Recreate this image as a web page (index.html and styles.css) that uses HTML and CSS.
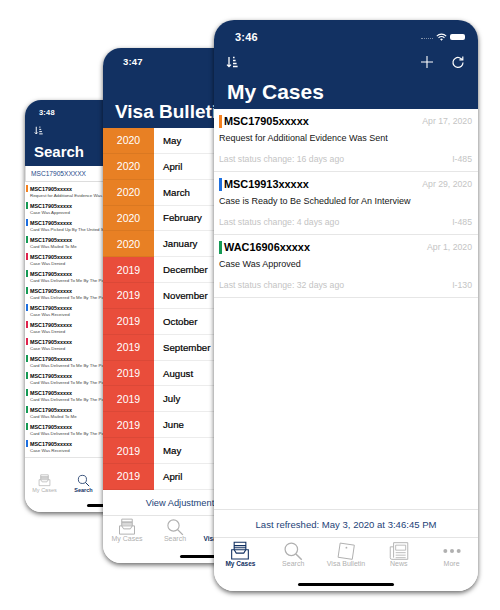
FILE: index.html
```html
<!DOCTYPE html>
<html lang="en">
<head>
    <meta charset="UTF-8">
    <meta name="viewport" content="width=device-width, initial-scale=1.0">
    <title>My Cases</title>
    <link rel="stylesheet" href="styles.css">
</head>
<body>
    <svg class="icon-defs" width="0" height="0">
        <symbol id="i-sort" viewBox="0 0 12 12">
            <path d="M3 1v9.500M1 8.600l2 2 2-2M7 1.500h1.600M7 4.500h2.600M7 7.500h3.600M7 10.500h4.600" fill="none" stroke="currentColor" stroke-width="1.300"/>
        </symbol>
        <symbol id="i-inbox" viewBox="0 0 24 24">
            <path d="M5 1.500h14v4H5zM5 5.500h14v5H5zM2 10.500h3l2.500 4h9l2.500-4h3v11H2zM5 8h14" fill="none" stroke="currentColor" stroke-width="1.300"/>
        </symbol>
        <symbol id="i-search" viewBox="0 0 24 24">
            <circle cx="10" cy="10" r="7.500" fill="none" stroke="currentColor" stroke-width="1.500"/>
            <path d="M15.500 15.500l7 7" fill="none" stroke="currentColor" stroke-width="1.800"/>
        </symbol>
        <symbol id="i-note" viewBox="0 0 24 24">
            <path d="M5 2.500l17 2.500-2.500 17L2.500 19.500z" fill="none" stroke="currentColor" stroke-width="1.200"/>
            <circle cx="12.500" cy="8" r="1.100" fill="currentColor"/>
        </symbol>
        <symbol id="i-news" viewBox="0 0 24 24">
            <path d="M5.500 2h17v20H3.500a2 2 0 0 1-2-2V7h4M5.500 2v18" fill="none" stroke="currentColor" stroke-width="1.100"/>
            <path d="M8 5h12v6H8zM8 14h12M8 17h12M8 20h12" fill="none" stroke="currentColor" stroke-width="1"/>
        </symbol>
        <symbol id="i-more" viewBox="0 0 24 24">
            <circle cx="4" cy="12" r="2.400" fill="currentColor"/>
            <circle cx="12" cy="12" r="2.400" fill="currentColor"/>
            <circle cx="20" cy="12" r="2.400" fill="currentColor"/>
        </symbol>
    </svg>

    <div class="canvas">

        <!-- back phone: search -->
        <section class="phone phone-search">
            <header class="bar">
                <div class="time">3:48</div>
                <svg class="sort"><use href="#i-sort"/></svg>
                <h1>Search</h1>
            </header>
            <div class="search-field">MSC17905XXXXX</div>
            <ul class="mini-list">
                <li class="orange"><b>MSC17905xxxxx</b><span>Request for Additional Evidence Was Sent</span></li>
                <li class="green"><b>MSC17905xxxxx</b><span>Case Was Approved</span></li>
                <li class="blue"><b>MSC17905xxxxx</b><span>Card Was Picked Up By The United States</span></li>
                <li class="green"><b>MSC17905xxxxx</b><span>Card Was Mailed To Me</span></li>
                <li class="red"><b>MSC17905xxxxx</b><span>Case Was Denied</span></li>
                <li class="green"><b>MSC17905xxxxx</b><span>Card Was Delivered To Me By The Post</span></li>
                <li class="green"><b>MSC17905xxxxx</b><span>Card Was Delivered To Me By The Post</span></li>
                <li class="blue"><b>MSC17905xxxxx</b><span>Case Was Received</span></li>
                <li class="red"><b>MSC17905xxxxx</b><span>Case Was Denied</span></li>
                <li class="red"><b>MSC17905xxxxx</b><span>Case Was Denied</span></li>
                <li class="green"><b>MSC17905xxxxx</b><span>Card Was Delivered To Me By The Post</span></li>
                <li class="green"><b>MSC17905xxxxx</b><span>Card Was Delivered To Me By The Post</span></li>
                <li class="green"><b>MSC17905xxxxx</b><span>Card Was Delivered To Me By The Post</span></li>
                <li class="green"><b>MSC17905xxxxx</b><span>Card Was Mailed To Me</span></li>
                <li class="green"><b>MSC17905xxxxx</b><span>Card Was Delivered To Me By The Post</span></li>
                <li class="blue"><b>MSC17905xxxxx</b><span>Case Was Received</span></li>
                <li class="blue"></li>
            </ul>
            <nav class="tabs">
                <a class="tab"><svg><use href="#i-inbox"/></svg>My Cases</a>
                <a class="tab active"><svg><use href="#i-search"/></svg>Search</a>
                <a class="tab"></a>
                <a class="tab"></a>
                <a class="tab"></a>
            </nav>
            <div class="home-bar"></div>
        </section>

        <!-- middle phone: visa bulletin -->
        <section class="phone phone-visa">
            <header class="bar">
                <div class="time">3:47</div>
                <h1>Visa Bulletin</h1>
            </header>
            <ul class="months">
                <li><span class="year y2020">2020</span><span class="month">May</span></li>
                <li><span class="year y2020">2020</span><span class="month">April</span></li>
                <li><span class="year y2020">2020</span><span class="month">March</span></li>
                <li><span class="year y2020">2020</span><span class="month">February</span></li>
                <li><span class="year y2020">2020</span><span class="month">January</span></li>
                <li><span class="year y2019">2019</span><span class="month">December</span></li>
                <li><span class="year y2019">2019</span><span class="month">November</span></li>
                <li><span class="year y2019">2019</span><span class="month">October</span></li>
                <li><span class="year y2019">2019</span><span class="month">September</span></li>
                <li><span class="year y2019">2019</span><span class="month">August</span></li>
                <li><span class="year y2019">2019</span><span class="month">July</span></li>
                <li><span class="year y2019">2019</span><span class="month">June</span></li>
                <li><span class="year y2019">2019</span><span class="month">May</span></li>
                <li><span class="year y2019">2019</span><span class="month">April</span></li>
            </ul>
            <div class="footer-link">View Adjustment of Status Filing Charts</div>
            <nav class="tabs">
                <a class="tab"><svg><use href="#i-inbox"/></svg>My Cases</a>
                <a class="tab"><svg><use href="#i-search"/></svg>Search</a>
                <a class="tab active"><svg><use href="#i-note"/></svg>Visa Bulletin</a>
                <a class="tab"></a>
                <a class="tab"></a>
            </nav>
            <div class="home-bar"></div>
        </section>

        <!-- front phone: my cases -->
        <section class="phone phone-cases">
            <header class="bar">
                <div class="status">
                    <div class="time">3:46</div>
                    <div class="status-icons">
                        <span class="signal"></span>
                        <svg class="wifi" viewBox="0 0 14 10">
                            <path d="M1 3.800a8.500 8.500 0 0 1 12 0M3.200 6a5.400 5.400 0 0 1 7.600 0" fill="none" stroke="currentColor" stroke-width="1.400"/>
                            <path d="M5.200 7.900a2.600 2.600 0 0 1 3.600 0L7 9.700z" fill="currentColor"/>
                        </svg>
                        <span class="battery"></span>
                    </div>
                </div>
                <div class="actions">
                    <svg class="sort"><use href="#i-sort"/></svg>
                    <div class="actions-right">
                        <svg class="action" viewBox="0 0 14 14">
                            <path d="M7 1v12M1 7h12" fill="none" stroke="currentColor" stroke-width="1.100"/>
                        </svg>
                        <svg class="action" viewBox="0 0 14 14">
                            <path d="M12 7.500A5 5 0 1 1 8.500 2.700L11.500 4.500" fill="none" stroke="currentColor" stroke-width="1.200"/>
                            <path d="M11.800 1.500v3.400H8.400" fill="none" stroke="currentColor" stroke-width="1.200"/>
                        </svg>
                    </div>
                </div>
                <h1>My Cases</h1>
            </header>
            <ul class="cases">
                <li class="case">
                    <div class="case-top"><b class="code orange">MSC17905xxxxx</b><span>Apr 17, 2020</span></div>
                    <p>Request for Additional Evidence Was Sent</p>
                    <div class="case-bottom"><span>Last status change: 16 days ago</span><span>I-485</span></div>
                </li>
                <li class="case">
                    <div class="case-top"><b class="code blue">MSC19913xxxxx</b><span>Apr 29, 2020</span></div>
                    <p>Case is Ready to Be Scheduled for An Interview</p>
                    <div class="case-bottom"><span>Last status change: 4 days ago</span><span>I-485</span></div>
                </li>
                <li class="case">
                    <div class="case-top"><b class="code green">WAC16906xxxxx</b><span>Apr 1, 2020</span></div>
                    <p>Case Was Approved</p>
                    <div class="case-bottom"><span>Last status change: 32 days ago</span><span>I-130</span></div>
                </li>
            </ul>
            <div class="footer-link">Last refreshed: May 3, 2020 at 3:46:45 PM</div>
            <nav class="tabs">
                <a class="tab active"><svg><use href="#i-inbox"/></svg>My Cases</a>
                <a class="tab"><svg><use href="#i-search"/></svg>Search</a>
                <a class="tab"><svg><use href="#i-note"/></svg>Visa Bulletin</a>
                <a class="tab"><svg><use href="#i-news"/></svg>News</a>
                <a class="tab"><svg class="more"><use href="#i-more"/></svg>More</a>
            </nav>
            <div class="home-bar"></div>
        </section>
    </div>
</body>
</html>
```

FILE: styles.css
```css
* {
    box-sizing: border-box;
}
body {
    margin: 0;
    background-color: white;
    font-family: "Liberation Sans", Arial, sans-serif;
    color: black;
}
ul {
    list-style: none;
    margin: 0;
    padding: 0;
}
h1, p {
    margin: 0;
}
.icon-defs {
    position: absolute;
}
.canvas {
    position: relative;
    width: 500px;
    height: 610px;
    overflow: hidden;
}

/* phones */
.phone {
    position: absolute;
    display: flex;
    flex-direction: column;
    background-color: white;
    overflow: hidden;
    box-shadow: 0 2px 5px rgba(0, 0, 0, 0.6);
}
.phone-search {
    left: 25px;
    top: 100px;
    width: 195px;
    height: 412px;
    border-radius: 16px;
}
.phone-visa {
    left: 103px;
    top: 48px;
    width: 240px;
    height: 515px;
    border-radius: 18px;
}
.phone-cases {
    left: 214px;
    top: 20px;
    width: 264px;
    height: 571px;
    border-radius: 20px;
}
.bar {
    background-color: #123162;
    color: white;
    flex-shrink: 0;
}
.bar h1 {
    font-size: 21px;
    line-height: 26px;
    font-weight: bold;
}
.time {
    font-size: 9.500px;
    font-weight: bold;
    letter-spacing: 0.2px;
}
.sort {
    display: block;
    width: 12px;
    height: 12px;
}

/* tab bar */
.tabs {
    display: flex;
    flex-shrink: 0;
    border-top: 1px solid #e4e4e4;
    background-color: white;
}
.tab {
    flex: 1 1 0;
    display: flex;
    flex-direction: column;
    align-items: center;
    color: #b0b0b0;
    white-space: nowrap;
    font-size: 7px;
}
.tab svg {
    display: block;
    width: 18px;
    height: 18px;
    margin-bottom: -1px;
}
.tab .more {
    width: 15px;
}
.tab.active {
    color: #123162;
    font-size: 6.500px;
    font-weight: bold;
}
.home-bar {
    position: absolute;
    left: 50%;
    bottom: 5px;
    width: 36%;
    height: 3px;
    margin-left: -18%;
    border-radius: 2px;
    background-color: black;
}
.footer-link {
    flex-shrink: 0;
    text-align: center;
    white-space: nowrap;
    color: #1d3f77;
}

/* front phone */
.phone-cases .bar {
    height: 89px;
    padding: 11px 13px 0;
}
.phone-cases .time {
    font-size: 11px;
}
.status {
    display: flex;
    justify-content: space-between;
    align-items: center;
    height: 11px;
    padding-left: 8px;
}
.status-icons {
    display: flex;
    align-items: center;
    gap: 3px;
}
.signal {
    width: 12px;
    height: 1px;
    margin-top: 4px;
    border-top: 1px dotted #7f8fa8;
}
.wifi {
    width: 11px;
    height: 8px;
}
.battery {
    width: 15px;
    height: 6px;
    border-radius: 2px;
    background-color: white;
}
.actions {
    display: flex;
    justify-content: space-between;
    align-items: center;
    height: 14px;
    margin-top: 13px;
    margin-left: -1px;
}
.actions-right {
    display: flex;
    gap: 17px;
}
.action {
    width: 14px;
    height: 14px;
}
.phone-cases h1 {
    margin-top: 10px;
}
.phone-cases .tabs {
    height: 54px;
    padding-top: 3px;
}
.phone-cases .tab svg {
    width: 20px;
    height: 20px;
}
.phone-cases .footer-link {
    height: 28px;
    line-height: 29px;
    border-top: 1px solid #e4e4e4;
    font-size: 9.550px;
}
.cases {
    flex: 1;
}
.case {
    height: 63px;
    padding: 5px 6px 0 5px;
    border-bottom: 1px solid #e6e6e6;
}
.case-top, .case-bottom {
    display: flex;
    justify-content: space-between;
    align-items: center;
    color: #c4c4c4;
    font-size: 8.700px;
}
.case-top {
    height: 14px;
}
.code {
    padding-left: 2px;
    border-left: 3px solid;
    color: black;
    font-size: 10.900px;
    line-height: 13px;
}
.code.orange {
    border-left-color: #f5811f;
}
.code.blue {
    border-left-color: #1c6fe0;
}
.code.green {
    border-left-color: #159a55;
}
.case p {
    margin-top: 5px;
    font-size: 9px;
    line-height: 11px;
    color: #161616;
}
.case-bottom {
    margin-top: 9px;
    height: 11px;
}

/* middle phone */
.phone-visa .bar {
    height: 80px;
    padding: 8px 12px 0;
}
.phone-visa .time {
    padding-left: 8px;
}
.phone-visa h1 {
    margin-top: 32px;
    font-size: 19px;
    white-space: nowrap;
}
.months {
    flex-shrink: 0;
}
.months li {
    display: flex;
    height: 25.850px;
}
.year {
    width: 51px;
    display: flex;
    align-items: center;
    justify-content: center;
    border-bottom: 1px solid rgba(0, 0, 0, 0.06);
    color: white;
    font-size: 10.500px;
}
.y2020 {
    background-color: #e88024;
}
.y2019 {
    background-color: #e94d3b;
}
.month {
    flex: 1;
    display: flex;
    align-items: center;
    padding-left: 9px;
    border-bottom: 1px solid #ececec;
    font-size: 9.700px;
    -webkit-text-stroke: 0.2px black;
    color: black;
}
.phone-visa .footer-link {
    height: 25px;
    line-height: 26px;
    padding-left: 8px;
    font-size: 9.300px;
}
.phone-visa .tabs {
    height: 48px;
    padding-top: 2px;
}

/* back phone */
.phone-search .bar {
    height: 66px;
    padding: 8px 9px 0;
}
.phone-search .time {
    padding-left: 5px;
    font-size: 7.500px;
}
.phone-search .sort {
    width: 9px;
    height: 9px;
    margin-top: 9px;
}
.phone-search h1 {
    margin-top: 7px;
    font-size: 15px;
    line-height: 20px;
}
.search-field {
    flex-shrink: 0;
    height: 16px;
    padding-left: 5px;
    line-height: 15px;
    border-bottom: 1px solid #ddd;
    border-left: 1px solid #ddd;
    color: #1f4a8a;
    font-size: 6.600px;
}
.mini-list {
    flex-shrink: 0;
    height: 276px;
    overflow: hidden;
    padding-top: 1.500px;
    border-bottom: 1px solid #e4e4e4;
}
.mini-list li {
    height: 17px;
    padding: 1px 0 0 5px;
    position: relative;
    white-space: nowrap;
}
.mini-list li::before {
    content: "";
    position: absolute;
    left: 1px;
    top: 1.500px;
    width: 2px;
    height: 7px;
}
.mini-list .orange::before {
    background-color: #f5811f;
}
.mini-list .green::before {
    background-color: #159a55;
}
.mini-list .blue::before {
    background-color: #1c6fe0;
}
.mini-list .red::before {
    background-color: #e0234e;
}
.mini-list b {
    display: block;
    font-size: 5.400px;
    line-height: 8px;
}
.mini-list span {
    display: block;
    font-size: 4.400px;
    line-height: 6px;
    color: #444;
}
.phone-search .tabs {
    margin-top: auto;
    height: 40px;
    padding-top: 2px;
    border-top: none;
}
.phone-search .tab {
    font-size: 5.500px;
}
.phone-search .tab svg {
    width: 13px;
    height: 13px;
    margin-bottom: 0;
}
```
